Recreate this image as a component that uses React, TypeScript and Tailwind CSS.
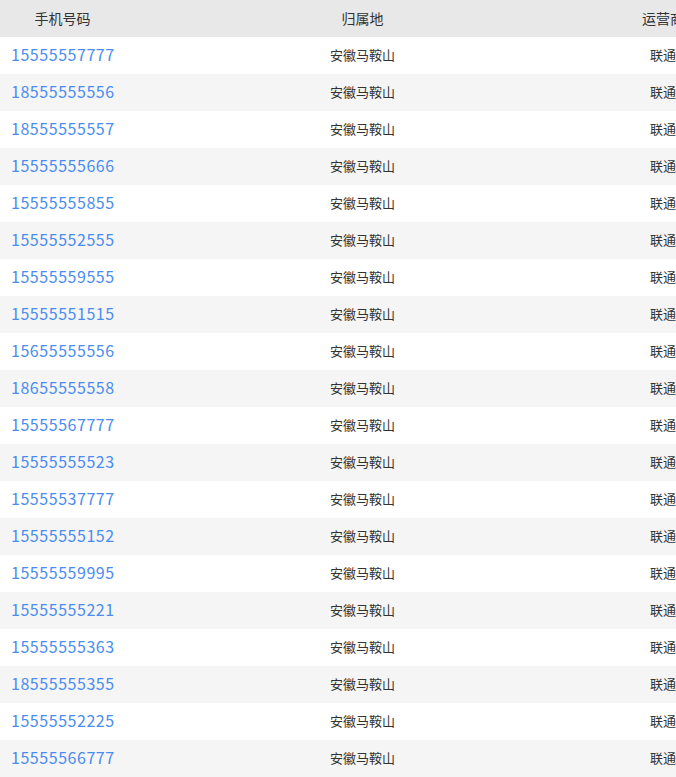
const rows = [
  '15555557777',
  '18555555556',
  '18555555557',
  '15555555666',
  '15555555855',
  '15555552555',
  '15555559555',
  '15555551515',
  '15655555556',
  '18655555558',
  '15555567777',
  '15555555523',
  '15555537777',
  '15555555152',
  '15555559995',
  '15555555221',
  '15555555363',
  '18555555355',
  '15555552225',
  '15555566777',
];

export default function App() {
  return (
    <div className="w-[676px] h-[777px] overflow-hidden bg-white font-['Noto_Sans_CJK_SC',sans-serif] text-[#333]">
      <div className="w-[726px]">
        {/* header */}
        <div className="grid grid-cols-[125px_475px_126px] h-[37px] items-center bg-[#e8e8e8] text-[14px]">
          <div className="text-center">手机号码</div>
          <div className="text-center">归属地</div>
          <div className="text-center">运营商</div>
        </div>
        {rows.map((num, i) => (
          <div
            key={num}
            className={`grid grid-cols-[125px_475px_126px] h-[37px] items-center ${
              i % 2 === 1 ? 'bg-[#f5f5f5]' : 'bg-white'
            }`}
          >
            <div className="pl-[11px] pb-[3px] text-[16px] tracking-[0.55px] text-[#4a8cf0]">{num}</div>
            <div className="pb-[2px] text-center text-[13px]">安徽马鞍山</div>
            <div className="pb-[2px] text-center text-[13px]">联通</div>
          </div>
        ))}
      </div>
    </div>
  );
}
